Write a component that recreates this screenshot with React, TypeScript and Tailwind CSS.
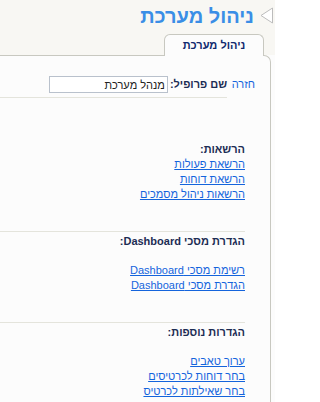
import React from "react"

const links1 = ["הרשאת פעולות", "הרשאת דוחות", "הרשאות ניהול מסמכים"]
const links2 = ["רשימת מסכי Dashboard", "הגדרת מסכי Dashboard"]
const links3 = ["ערוך טאבים", "בחר דוחות לכרטיסים", "בחר שאילתות לכרטיס"]

function LinkList({ items }: { items: string[] }) {
  return (
    <ul>
      {items.map((t) => (
        <li key={t} className="leading-[15px]">
          <a href="#" className="text-[#1464dc] underline">
            {t}
          </a>
        </li>
      ))}
    </ul>
  )
}

export default function App() {
  return (
    <div
      dir="rtl"
      className="w-[275px] h-[402px] overflow-hidden bg-[#fcfcfc] font-['Liberation_Sans','DejaVu_Sans',Arial,sans-serif] text-[11px]"
    >
      {/* header */}
      <div className="bg-[#f8f7f3]">
        <div className="flex h-[34px] items-start pr-[2px] pt-[3px]">
          <svg width="13" height="18" viewBox="0 0 13 18" className="mt-[4px] shrink-0">
            <path d="M1 8.5 L12.5 1 L12.5 16 Z" fill="#ffffff" stroke="#bcbcbc" strokeWidth="1" />
          </svg>
          <h1 className="mr-[6px] text-[20px] font-bold leading-[26px] text-[#3a8ee6]">ניהול מערכת</h1>
        </div>
        <div className="flex pr-[11px]">
          <div className="relative z-10 -mb-px flex h-[22px] w-[100px] items-center justify-center rounded-t-[6px] border border-b-0 border-[#c8c8c0] bg-[#fcfcfc] font-bold text-[#10296e]">
            ניהול מערכת
          </div>
        </div>
      </div>

      {/* panel */}
      <div className="mr-[4px] h-[400px] rounded-tr-[7px] border-t border-r border-[#c8c8c0] bg-[#fcfcfc]">
        <div className="flex items-start pt-[20px]">
          <div className="w-[43px] shrink-0 pr-[15px] leading-[17px]">
            <a href="#" className="text-[#1464dc]">חזרה</a>
          </div>
          <div className="flex flex-1 items-center border-b border-[#e4e4dc] pb-[4px]">
            <span className="font-bold text-[#1c2d54]">שם פרופיל:</span>
            <input
              readOnly
              defaultValue="מנהל מערכת"
              className="mr-[2px] h-[17px] w-[119px] border border-[#b9c1cc] bg-white pr-[2px] text-[11px] text-[#222] outline-none"
            />
          </div>
        </div>

        <div className="mr-[25px] border-b border-[#e4e4dc] pt-[44px] pb-[29px]">
          <div className="font-bold leading-[15px] text-[#1c2d54]">הרשאות:</div>
          <LinkList items={links1} />
        </div>

        <div className="mr-[25px] border-b border-[#e4e4dc] pt-[2px] pb-[29px]">
          <div className="font-bold leading-[15px] text-[#1c2d54]">הגדרת מסכי Dashboard:</div>
          <div className="h-[14px]" />
          <LinkList items={links2} />
        </div>

        <div className="mr-[25px] pt-[2px]">
          <div className="font-bold leading-[15px] text-[#1c2d54]">הגדרות נוספות:</div>
          <div className="h-[14px]" />
          <LinkList items={links3} />
        </div>
      </div>
    </div>
  )
}
